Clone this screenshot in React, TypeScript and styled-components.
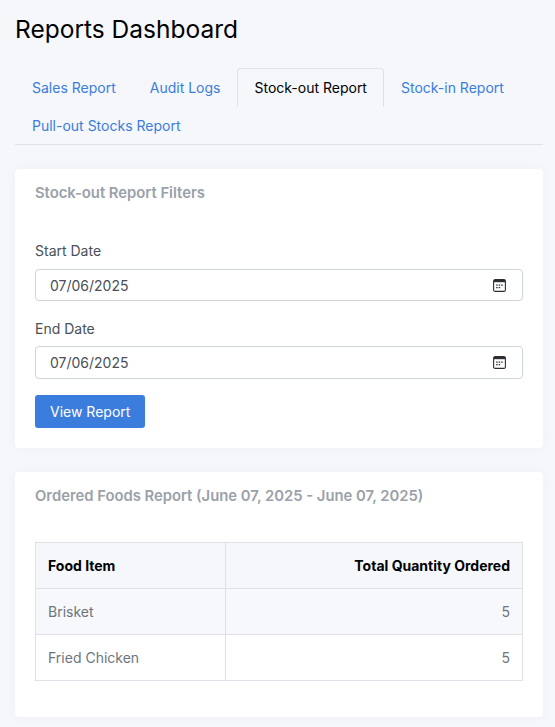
import React from 'react'
import styled, { createGlobalStyle } from 'styled-components'

const GlobalStyle = createGlobalStyle`
  * {
    box-sizing: border-box;
  }
  body {
    margin: 0;
    background: #f5f7fb;
    font-family: Inter, 'Liberation Sans', sans-serif;
    font-size: 14px;
    line-height: 1.5;
    color: #000;
  }
`

const Page = styled.div`
  padding: 15px 12px 15px 15px;
`

const Title = styled.h1`
  margin: 0 0 24px;
  font-size: 24.5px;
  font-weight: 400;
  line-height: 29px;
`

const TabList = styled.ul`
  display: flex;
  flex-wrap: wrap;
  margin: 0 0 24px;
  padding: 0;
  list-style: none;
  border-bottom: 1px solid #dee2e6;
`

const Tab = styled.li<{ $active?: boolean }>`
  margin-bottom: -1px;
  padding: 8px 16px;
  height: 39px;
  line-height: 21px;
  border: 1px solid ${(p) => (p.$active ? '#dee2e6' : 'transparent')};
  border-bottom-color: ${(p) => (p.$active ? '#f5f7fb' : 'transparent')};
  border-radius: 4px 4px 0 0;
  color: ${(p) => (p.$active ? '#000' : '#3b7ddd')};
  background: ${(p) => (p.$active ? '#f5f7fb' : 'transparent')};
`

const Card = styled.section`
  margin-bottom: 24px;
  padding: 14px 20px 20px;
  background: #fff;
  border-radius: 4px;
  box-shadow: 0 0 14px rgba(33, 37, 41, 0.03);
`

const CardTitle = styled.h5<{ $gap: number }>`
  margin: 0 0 ${(p) => p.$gap}px;
  padding-bottom: 10px;
  font-size: 14.8px;
  font-weight: 600;
  line-height: 21px;
  color: #9aa1a9;
`

const Label = styled.label`
  display: block;
  margin-bottom: 7.5px;
  line-height: 21px;
  color: #495057;
`

const DateField = styled.div`
  position: relative;
  margin-bottom: 16.5px;
`

const DateInput = styled.input`
  display: block;
  width: 100%;
  height: 32.5px;
  padding: 5px 14px 4px;
  font: inherit;
  color: #495057;
  background: #fff;
  border: 1px solid #ced4da;
  border-radius: 4px;
`

const CalendarIcon = styled.svg`
  position: absolute;
  top: 10px;
  right: 17px;
  width: 13px;
  height: 13px;
`

const Button = styled.button`
  display: block;
  height: 32.5px;
  padding: 0 15px;
  font: inherit;
  color: #fff;
  background: #3b7ddd;
  border: 0;
  border-radius: 3px;
`

const Table = styled.table`
  width: 100%;
  margin: 0 0 16px;
  border-collapse: collapse;
  table-layout: fixed;
`

const Head = styled.th<{ $right?: boolean; $width?: string }>`
  width: ${(p) => p.$width ?? 'auto'};
  height: 46px;
  padding: 0 12px;
  font-weight: 700;
  text-align: ${(p) => (p.$right ? 'right' : 'left')};
  background: #f5f7fb;
  border: 1px solid #dee2e6;
`

const Row = styled.tr<{ $striped?: boolean }>`
  background: ${(p) => (p.$striped ? '#f7f8fb' : '#fff')};
`

const Cell = styled.td<{ $right?: boolean }>`
  height: 46px;
  padding: 0 12px;
  color: #6c757d;
  text-align: ${(p) => (p.$right ? 'right' : 'left')};
  border: 1px solid #dee2e6;
`

const tabs = ['Sales Report', 'Audit Logs', 'Stock-out Report', 'Stock-in Report', 'Pull-out Stocks Report']

const rows = [
  { name: 'Brisket', qty: 5 },
  { name: 'Fried Chicken', qty: 5 }
]

function DatePicker({ value }: { value: string }) {
  return (
    <DateField>
      <DateInput type='text' defaultValue={value} readOnly />
      <CalendarIcon viewBox='0 0 13 13' aria-hidden='true'>
        <rect x='0.6' y='0.6' width='11.8' height='11.8' rx='1.5' fill='none' stroke='#2b2f33' strokeWidth='1.1' />
        <rect x='1' y='1' width='11' height='2.2' fill='#2b2f33' />
        <path d='M3.2 5.4h1.5v1.4H3.2zM5.7 5.4h1.5v1.4H5.7zM8.2 5.4h1.5v1.4H8.2zM3.2 7.9h1.5v1.4H3.2zM5.7 7.9h1.5v1.4H5.7z' fill='#2b2f33' />
      </CalendarIcon>
    </DateField>
  )
}

export default function App() {
  return (
    <Page>
      <GlobalStyle />
      <Title>Reports Dashboard</Title>

      <TabList>
        {tabs.map((t) => (
          <Tab key={t} $active={t === 'Stock-out Report'}>
            {t}
          </Tab>
        ))}
      </TabList>

      <Card>
        <CardTitle $gap={26}>Stock-out Report Filters</CardTitle>
        <Label>Start Date</Label>
        <DatePicker value='07/06/2025' />
        <Label>End Date</Label>
        <DatePicker value='07/06/2025' />
        <Button>View Report</Button>
      </Card>

      <Card>
        <CardTitle $gap={25}>Ordered Foods Report (June 07, 2025 - June 07, 2025)</CardTitle>
        <Table>
          <thead>
            <tr>
              <Head $width='190px'>Food Item</Head>
              <Head $right>Total Quantity Ordered</Head>
            </tr>
          </thead>
          <tbody>
            {rows.map((r, i) => (
              <Row key={r.name} $striped={i % 2 === 0}>
                <Cell>{r.name}</Cell>
                <Cell $right>{r.qty}</Cell>
              </Row>
            ))}
          </tbody>
        </Table>
      </Card>
    </Page>
  )
}
